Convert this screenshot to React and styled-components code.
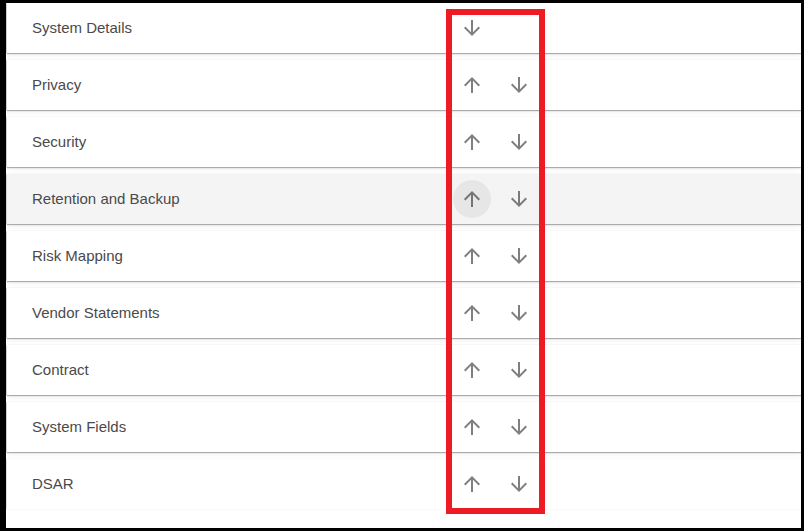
import React from 'react'
import styled, { createGlobalStyle } from 'styled-components'

const GlobalStyle = createGlobalStyle`
  html, body {
    margin: 0;
    padding: 0;
    background: #fff;
  }
  * {
    box-sizing: border-box;
  }
`

const Frame = styled.div`
  position: relative;
  width: 804px;
  height: 531px;
  border: 3px solid #000;
  border-left-width: 6px;
  background: #fff;
  overflow: hidden;
  font-family: "Liberation Sans", Arial, sans-serif;
`

const List = styled.div`
  display: flex;
  flex-direction: column;
  gap: 7px;
  padding-left: 1px;
`

const Row = styled.div`
  display: flex;
  align-items: center;
  height: 50px;
  padding-left: 25px;
  background: ${(p) => (p.$hover ? '#f4f4f4' : '#fff')};
  box-shadow: ${(p) =>
    p.$last
      ? '-1px 0 1px rgba(0, 0, 0, 0.12)'
      : '0 1px 1px rgba(0, 0, 0, 0.28), 0 2px 5px rgba(0, 0, 0, 0.07), -1px 0 1px rgba(0, 0, 0, 0.12)'};
`

const Label = styled.div`
  width: 421px;
  margin-top: -2px;
  font-size: 15px;
  color: #4a4a4a;
`

const Actions = styled.div`
  display: flex;
  gap: 9px;
`

const IconButton = styled.button`
  display: flex;
  align-items: center;
  justify-content: center;
  width: 38px;
  height: 38px;
  padding: 0;
  border: none;
  border-radius: 50%;
  background: ${(p) => (p.$hover ? '#e6e6e6' : 'transparent')};
  cursor: pointer;
  svg {
    width: 24px;
    height: 24px;
    fill: rgba(0, 0, 0, 0.5);
  }
`

const Highlight = styled.div`
  position: absolute;
  left: 440px;
  top: 6px;
  width: 99px;
  height: 505px;
  border: 6px solid #ed1c24;
  pointer-events: none;
`

const ArrowUp = () => (
  <svg viewBox="0 0 24 24">
    <path d="M4 12l1.41 1.41L11 7.83V20h2V7.83l5.58 5.59L20 12l-8-8-8 8z" />
  </svg>
)

const ArrowDown = () => (
  <svg viewBox="0 0 24 24">
    <path d="M20 12l-1.41-1.41L13 16.17V4h-2v12.17l-5.58-5.59L4 12l8 8 8-8z" />
  </svg>
)

const sections = [
  'System Details',
  'Privacy',
  'Security',
  'Retention and Backup',
  'Risk Mapping',
  'Vendor Statements',
  'Contract',
  'System Fields',
  'DSAR',
]

export default function App() {
  return (
    <>
      <GlobalStyle />
      <Frame>
        <List>
          {sections.map((name, i) => {
            const hover = name === 'Retention and Backup'
            return (
              <Row key={name} $hover={hover} $last={i === sections.length - 1}>
                <Label>{name}</Label>
                <Actions>
                  {i > 0 && (
                    <IconButton $hover={hover} aria-label="Move up">
                      <ArrowUp />
                    </IconButton>
                  )}
                  <IconButton aria-label="Move down">
                    <ArrowDown />
                  </IconButton>
                </Actions>
              </Row>
            )
          })}
        </List>
        <Highlight />
      </Frame>
    </>
  )
}
